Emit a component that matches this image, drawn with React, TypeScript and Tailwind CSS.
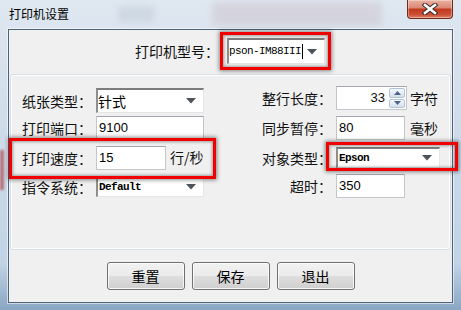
import { ReactNode } from 'react';

const CJK = { fontFamily: '"Noto Sans CJK SC", "Noto Sans", sans-serif' };
const SANS = { fontFamily: '"Liberation Sans", Arial, sans-serif' };
const MONO = { fontFamily: '"Liberation Mono", "Courier New", monospace' };

function Arrow() {
  return (
    <svg width="10" height="6" viewBox="0 0 10 6" className="shrink-0">
      <path d="M0 0 H10 L5 5.5 Z" fill="#4b5459" />
    </svg>
  );
}

function Combo({ width, height, children }: { width: string; height: string; children: ReactNode }) {
  return (
    <div
      className={`${width} ${height} flex items-center justify-between bg-white border-t-2 border-l-2 border-r border-b border-t-[#7d7d7d] border-l-[#8e8e8e] border-r-[#e6e6e6] border-b-[#e6e6e6] pr-[7px]`}
    >
      <div className="flex items-center min-w-0">{children}</div>
      <Arrow />
    </div>
  );
}

function TextBox({ width, value }: { width: string; value: string }) {
  return (
    <div
      className={`${width} h-[24px] flex items-center bg-white border border-[#c3c6cb] border-t-[#a3a6ac] pl-[2px] text-[13px] text-black`}
      style={SANS}
    >
      {value}
    </div>
  );
}

function Label({ width, text }: { width: string; text: string }) {
  return (
    <div className={`${width} shrink-0 text-right text-[14px] text-[#111] leading-none pr-[4px]`} style={CJK}>
      {text}
    </div>
  );
}

function Spinner() {
  return (
    <div className="w-[71px] h-[24px] flex items-center justify-end bg-white border border-[#c3c6cb] border-t-[#a3a6ac] pr-[1px]">
      <span className="text-[13px] text-[#111] mr-[4px]" style={SANS}>
        33
      </span>
      <div className="flex flex-col gap-[1px] w-[16px] h-[20px]">
        {[0, 1].map((i) => (
          <div
            key={i}
            className="flex-1 flex items-center justify-center rounded-[2px] border border-[#b3c3d6] bg-[linear-gradient(180deg,#f6f9fc_0%,#e3ebf4_55%,#d3dfec_100%)]"
          >
            <svg width="7" height="4" viewBox="0 0 7 4">
              <path d={i === 0 ? 'M0 4 L3.5 0 L7 4 Z' : 'M0 0 L7 0 L3.5 4 Z'} fill="#4c648c" />
            </svg>
          </div>
        ))}
      </div>
    </div>
  );
}

function Button({ text }: { text: string }) {
  return (
    <div
      className="w-[78px] h-[28px] flex items-center justify-center rounded-[3px] border border-[#707070] text-[14px] text-black bg-[linear-gradient(180deg,#f2f2f2_0%,#ebebeb_48%,#dddddd_52%,#cfcfcf_100%)] shadow-[inset_0_0_0_1px_rgba(255,255,255,0.8)]"
      style={CJK}
    >
      {text}
    </div>
  );
}

const RED = 'absolute border-[3px] border-[#f20000] shadow-[0_0_4px_1px_rgba(0,0,0,0.45),inset_0_0_3px_1px_rgba(0,0,0,0.35)]';

export default function App() {
  return (
    <div className="relative w-[461px] h-[310px] overflow-hidden flex flex-col bg-[linear-gradient(180deg,#dfe8f1_0%,#cfdcea_40%,#c1d3e5_85%,#8aa6c3_100%)]">
      {/* glass blur behind the title bar */}
      <div className="absolute left-[212px] top-[2px] w-[170px] h-[24px] rounded-[4px] bg-[#c9b9c4] opacity-40 blur-[3px]" />
      <div className="absolute left-[118px] top-[6px] w-[36px] h-[16px] bg-[#b9c3ce] opacity-40 blur-[3px]" />
      <div className="absolute left-[0px] top-[150px] w-[4px] h-[40px] bg-[#a33] opacity-60 blur-[1px]" />

      {/* title bar */}
      <div className="relative h-[29px] flex items-start justify-between shrink-0">
        <div className="pl-[9px] pt-[7px] text-[12px] leading-[14px] text-black" style={CJK}>
          打印机设置
        </div>
        <div className="mr-[8px] w-[46px] h-[19px] flex items-center justify-center rounded-b-[4px] border border-t-0 border-[#6e2a1e] bg-[linear-gradient(180deg,#eab0a0_0%,#dc8a77_42%,#c23a20_52%,#cb4e33_80%,#dc8068_100%)] shadow-[inset_0_0_0_1px_rgba(255,255,255,0.35)]">
          <svg width="16" height="12" viewBox="0 0 16 12">
            <path d="M3 2 L13 10 M13 2 L3 10" stroke="#3b2a2a" strokeWidth="4.6" strokeLinecap="square" />
            <path d="M3 2 L13 10 M13 2 L3 10" stroke="#ffffff" strokeWidth="2.6" strokeLinecap="square" />
          </svg>
        </div>
      </div>

      {/* client area */}
      <div className="relative mx-[8px] h-[274px] shrink-0 flex flex-col border border-[#4d6379] bg-[#f0f0f0] shadow-[0_0_0_1px_rgba(255,255,255,0.55)]">
        {/* printer model */}
        <div className="h-[44px] flex items-start pl-[126px] pt-[8px]">
          <div className="w-[92px] h-[26px] flex items-center text-[14px] text-[#111]" style={CJK}>
            打印机型号：
          </div>
          <Combo width="w-[98px]" height="h-[26px]">
            <span className="text-[11px] tracking-[-0.6px] text-black" style={MONO}>
              pson-IM88III
            </span>
            <span className="ml-[1px] w-[1px] h-[15px] bg-black" />
          </Combo>
        </div>

        {/* group box */}
        <div className="mx-[1px] h-[176px] rounded-[3px] border border-[#d5dfe5] shadow-[inset_0_0_0_1px_#ffffff] flex">
          <div className="w-[219px] flex flex-col">
            <div className="mt-[13px] h-[25px] flex items-center">
              <Label width="w-[85px]" text="纸张类型：" />
              <Combo width="w-[108px]" height="h-[25px]">
                <span className="text-[14px] text-black leading-none" style={CJK}>
                  针式
                </span>
              </Combo>
            </div>
            <div className="mt-[3px] h-[24px] flex items-center">
              <Label width="w-[85px]" text="打印端口：" />
              <TextBox width="w-[108px]" value="9100" />
            </div>
            <div className="mt-[5px] h-[25px] flex items-center">
              <Label width="w-[85px]" text="打印速度：" />
              <TextBox width="w-[70px]" value="15" />
              <span className="ml-[4px] text-[14px] text-[#111]" style={CJK}>
                行/秒
              </span>
            </div>
            <div className="mt-[6px] h-[21px] flex items-center">
              <Label width="w-[85px]" text="指令系统：" />
              <Combo width="w-[108px]" height="h-[21px]">
                <span className="text-[11px] tracking-[-0.6px] font-bold text-black pl-[1px]" style={MONO}>
                  Default
                </span>
              </Combo>
            </div>
          </div>

          <div className="flex-1 flex flex-col">
            <div className="mt-[11px] h-[24px] flex items-center">
              <Label width="w-[106px]" text="整行长度：" />
              <Spinner />
              <span className="ml-[3px] text-[14px] text-[#111]" style={CJK}>
                字符
              </span>
            </div>
            <div className="mt-[6px] h-[24px] flex items-center">
              <Label width="w-[106px]" text="同步暂停：" />
              <TextBox width="w-[69px]" value="80" />
              <span className="ml-[5px] text-[14px] text-[#111]" style={CJK}>
                毫秒
              </span>
            </div>
            <div className="mt-[7px] h-[21px] flex items-center">
              <Label width="w-[106px]" text="对象类型：" />
              <Combo width="w-[104px]" height="h-[21px]">
                <span className="text-[11px] tracking-[-0.6px] font-bold text-black pl-[1px]" style={MONO}>
                  Epson
                </span>
              </Combo>
            </div>
            <div className="mt-[6px] h-[24px] flex items-center">
              <Label width="w-[106px]" text="超时：" />
              <TextBox width="w-[69px]" value="350" />
            </div>
          </div>
        </div>

        {/* buttons */}
        <div className="mt-[12px] flex justify-center gap-[7px]">
          <Button text="重置" />
          <Button text="保存" />
          <Button text="退出" />
        </div>
      </div>

      {/* red highlight annotations */}
      <div className={`${RED} left-[220px] top-[32px] w-[111px] h-[38px]`} />
      <div className={`${RED} left-[9px] top-[138px] w-[207px] h-[41px]`} />
      <div className={`${RED} left-[326px] top-[142px] w-[132px] h-[29px]`} />
    </div>
  );
}
